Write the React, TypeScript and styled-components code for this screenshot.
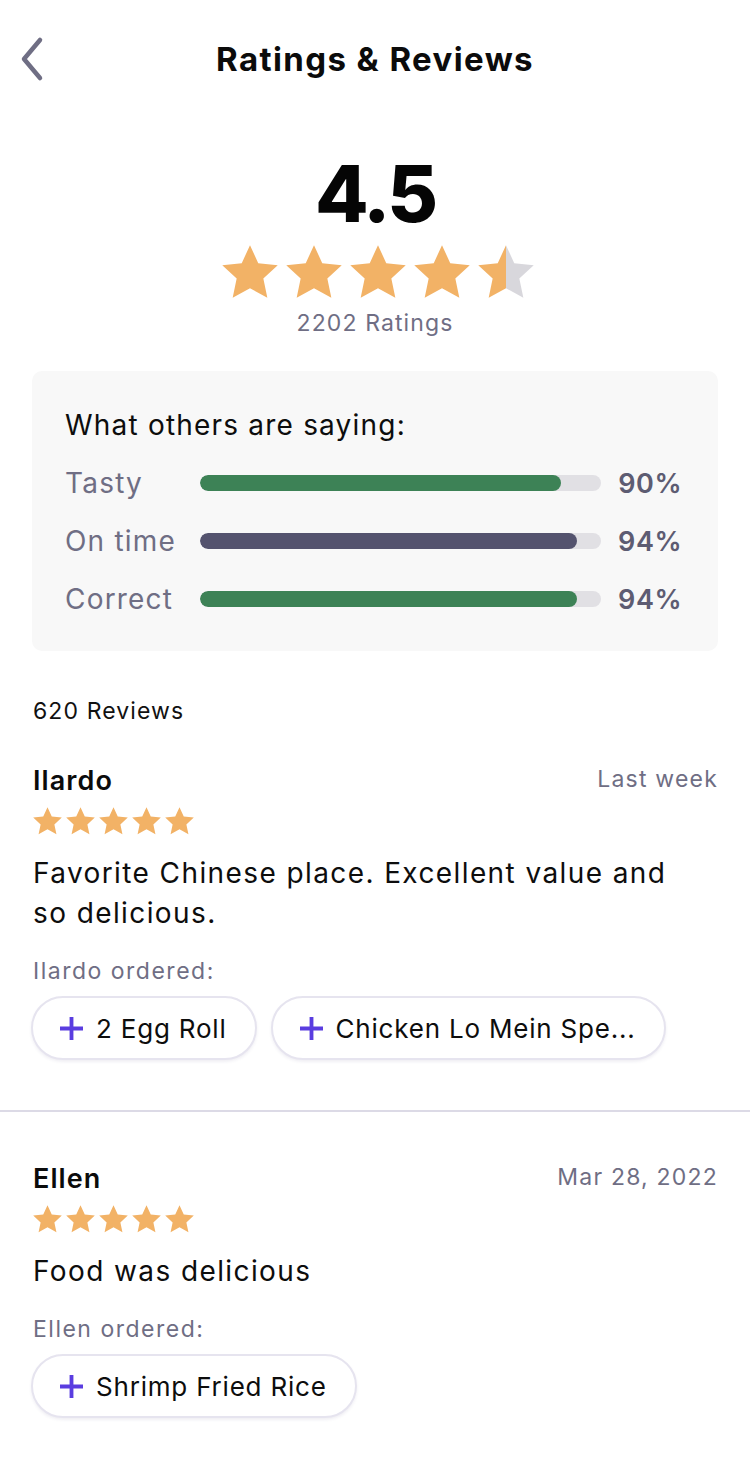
import React from "react";
import styled, { createGlobalStyle } from "styled-components";

const GlobalStyle = createGlobalStyle`
  body {
    margin: 0;
    background: #ffffff;
    font-family: "Inter", "Noto Sans", sans-serif;
    color: #111111;
  }
`;

type Review = {
  name: string;
  date: string;
  text: string;
  items: string[];
};

const reviews: Review[] = [
  {
    name: "Ilardo",
    date: "Last week",
    text: "Favorite Chinese place. Excellent value and so delicious.",
    items: ["2 Egg Roll", "Chicken Lo Mein Spe..."],
  },
  {
    name: "Ellen",
    date: "Mar 28, 2022",
    text: "Food was delicious",
    items: ["Shrimp Fried Rice"],
  },
];

const metrics = [
  { label: "Tasty", value: 90, color: "#3d8256" },
  { label: "On time", value: 94, color: "#54536e" },
  { label: "Correct", value: 94, color: "#3d8256" },
];

const STAR = "12,1.6 15.1,8.3 22.4,9.1 17,14.1 18.5,21.3 12,17.7 5.5,21.3 7,14.1 1.6,9.1 8.9,8.3";

// fill = 0..1, how much of the star is orange
const Star: React.FC<{ size: number; fill?: number; id?: string }> = ({ size, fill = 1, id }) => (
  <svg width={size} height={size} viewBox="0 0 24 24">
    {fill < 1 && id ? (
      <>
        <defs>
          <linearGradient id={id} x1="0" x2="1" y1="0" y2="0">
            <stop offset={fill} stopColor="#f2b266" />
            <stop offset={fill} stopColor="#d8d7dc" />
          </linearGradient>
        </defs>
        <polygon points={STAR} fill={`url(#${id})`} />
      </>
    ) : (
      <polygon points={STAR} fill="#f2b266" />
    )}
  </svg>
);

const App: React.FC = () => {
  return (
    <Page>
      <GlobalStyle />
      <Header>
        <BackButton>
          <svg width="30" height="46" viewBox="0 0 30 46">
            <path
              d="M24 4 L8 23 L24 42"
              fill="none"
              stroke="#6f6e84"
              strokeWidth="4.5"
              strokeLinecap="round"
              strokeLinejoin="round"
            />
          </svg>
        </BackButton>
        <Title>Ratings &amp; Reviews</Title>
        <span />
      </Header>

      <Summary>
        <Score>4.5</Score>
        <StarRow>
          {[1, 1, 1, 1, 0.5].map((f, i) => (
            <Star key={i} size={64} fill={f} id={`big-${i}`} />
          ))}
        </StarRow>
        <RatingCount>2202 Ratings</RatingCount>
      </Summary>

      <Card>
        <CardTitle>What others are saying:</CardTitle>
        {metrics.map((m) => (
          <MetricRow key={m.label}>
            <MetricLabel>{m.label}</MetricLabel>
            <Track>
              <Fill $color={m.color} style={{ width: `${m.value}%` }} />
            </Track>
            <Percent>{m.value}%</Percent>
          </MetricRow>
        ))}
      </Card>

      <ReviewCount>620 Reviews</ReviewCount>

      {reviews.map((r, idx) => (
        <ReviewBlock key={r.name} $first={idx === 0}>
          <ReviewHead>
            <Name>{r.name}</Name>
            <DateText>{r.date}</DateText>
          </ReviewHead>
          <SmallStars>
            {[0, 1, 2, 3, 4].map((i) => (
              <Star key={i} size={33} />
            ))}
          </SmallStars>
          <Body>{r.text}</Body>
          <Ordered>{r.name} ordered:</Ordered>
          <Chips>
            {r.items.map((item) => (
              <Chip key={item}>
                <svg width="23" height="23" viewBox="0 0 24 24">
                  <path d="M12 0 V24 M0 12 H24" stroke="#5a3de0" strokeWidth="4" />
                </svg>
                {item}
              </Chip>
            ))}
          </Chips>
        </ReviewBlock>
      ))}
    </Page>
  );
};

const Page = styled.div`
  width: 750px;
  min-height: 1459px;
  background: #ffffff;
`;

const Header = styled.div`
  display: grid;
  grid-template-columns: 80px 1fr 80px;
  align-items: center;
  height: 118px;
`;

const BackButton = styled.div`
  display: flex;
  align-items: center;
  padding-left: 16px;
  height: 100%;
`;

const Title = styled.h1`
  margin: 0;
  text-align: center;
  font-size: 33px;
  font-weight: 700;
  letter-spacing: 1.4px;
  color: #0b0b0b;
`;

const Summary = styled.div`
  display: flex;
  flex-direction: column;
  align-items: center;
  padding-top: 37px;
`;

const Score = styled.div`
  font-size: 78px;
  line-height: 78px;
  font-weight: 800;
  letter-spacing: -3px;
  color: #050505;
`;

const StarRow = styled.div`
  display: flex;
  margin-top: 8px;
  margin-left: 5px;
`;

const RatingCount = styled.div`
  font-size: 23px;
  line-height: 30px;
  letter-spacing: 1.1px;
  color: #6f6e84;
  margin-top: 3px;
`;

const Card = styled.div`
  margin: 33px 32px 0;
  padding: 36px 36px 23px 33px;
  background: #f8f8f8;
  border-radius: 10px;
`;

const CardTitle = styled.div`
  font-size: 28px;
  line-height: 36px;
  letter-spacing: 1.2px;
  color: #0d0d0d;
  margin-bottom: 11px;
`;

const MetricRow = styled.div`
  display: grid;
  grid-template-columns: 135px 1fr 81px;
  align-items: center;
  height: 58px;
`;

const MetricLabel = styled.div`
  font-size: 28px;
  letter-spacing: 1.2px;
  color: #6f6e84;
`;

const Track = styled.div`
  height: 16px;
  border-radius: 8px;
  background: #e1e0e4;
  overflow: hidden;
`;

const Fill = styled.div<{ $color: string }>`
  height: 100%;
  border-radius: 8px;
  background: ${(p) => p.$color};
`;

const Percent = styled.div`
  text-align: right;
  font-size: 27px;
  font-weight: 600;
  letter-spacing: 0.5px;
  color: #5d5c72;
`;

const ReviewCount = styled.div`
  margin: 45px 33px 0;
  font-size: 23px;
  line-height: 30px;
  letter-spacing: 1.1px;
  color: #111111;
`;

const ReviewBlock = styled.div<{ $first: boolean }>`
  padding: ${(p) => (p.$first ? "38px 32px 50px 33px" : "50px 32px 48px 33px")};
  border-bottom: ${(p) => (p.$first ? "2px solid #dcdae6" : "none")};
`;

const ReviewHead = styled.div`
  display: flex;
  justify-content: space-between;
  align-items: center;
`;

const Name = styled.div`
  font-size: 27px;
  line-height: 34px;
  font-weight: 600;
  letter-spacing: 1.1px;
  color: #0b0b0b;
`;

const DateText = styled.div`
  font-size: 23px;
  letter-spacing: 1.2px;
  color: #6f6e84;
  margin-top: -4px;
`;

const SmallStars = styled.div`
  display: flex;
  margin-top: 7px;
  margin-left: -2px;
`;

const Body = styled.p`
  margin: 15px 0 0;
  font-size: 28px;
  line-height: 40px;
  letter-spacing: 1.4px;
  color: #0d0d0d;
  max-width: 650px;
`;

const Ordered = styled.div`
  margin-top: 23px;
  font-size: 23px;
  line-height: 30px;
  letter-spacing: 1.5px;
  color: #6f6e84;
`;

const Chips = styled.div`
  display: flex;
  gap: 14px;
  margin-top: 10px;
  margin-left: -2px;
`;

const Chip = styled.div`
  display: flex;
  align-items: center;
  gap: 13px;
  height: 64px;
  box-sizing: border-box;
  padding: 0 28px 0 27px;
  border: 2px solid #e6e4ef;
  border-radius: 32px;
  background: #ffffff;
  box-shadow: 0 2px 3px rgba(60, 50, 110, 0.08);
  font-size: 26px;
  letter-spacing: 0.8px;
  color: #0d0d0d;
`;

export default App;
